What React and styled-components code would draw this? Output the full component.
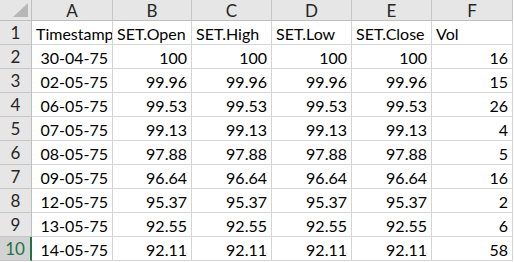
import React from 'react'
import styled, { createGlobalStyle } from 'styled-components'

const columns = ['A', 'B', 'C', 'D', 'E', 'F']
const widths = [32, 81, 79, 80, 80, 80, 81]

const header = ['Timestamp', 'SET.Open', 'SET.High', 'SET.Low', 'SET.Close', 'Vol']

const rows = [
  ['30-04-75', '100', '100', '100', '100', '16'],
  ['02-05-75', '99.96', '99.96', '99.96', '99.96', '15'],
  ['06-05-75', '99.53', '99.53', '99.53', '99.53', '26'],
  ['07-05-75', '99.13', '99.13', '99.13', '99.13', '4'],
  ['08-05-75', '97.88', '97.88', '97.88', '97.88', '5'],
  ['09-05-75', '96.64', '96.64', '96.64', '96.64', '16'],
  ['12-05-75', '95.37', '95.37', '95.37', '95.37', '2'],
  ['13-05-75', '92.55', '92.55', '92.55', '92.55', '6'],
  ['14-05-75', '92.11', '92.11', '92.11', '92.11', '58'],
]

const GlobalStyle = createGlobalStyle`
  body {
    margin: 0;
    background: #ffffff;
    overflow: hidden;
    font-family: Lato, "Open Sans", sans-serif;
  }
`

const Sheet = styled.div`
  display: grid;
  grid-template-columns: ${widths.map(w => w + 'px').join(' ')};
  grid-template-rows: 21px repeat(10, 24px);
  width: 514px;
  height: 262px;
  background: #ffffff;
  color: #000000;
  font-size: 16px;
`

const Corner = styled.div`
  position: relative;
  background: #e6e6e6;
  border-right: 1px solid #bfbfbf;
  border-bottom: 1px solid #bfbfbf;
`

const Triangle = styled.div`
  position: absolute;
  right: 3px;
  bottom: 3px;
  width: 0;
  height: 0;
  border-left: 15px solid transparent;
  border-bottom: 14px solid #b7b7b7;
`

const ColHead = styled.div`
  display: flex;
  align-items: center;
  justify-content: center;
  background: #e6e6e6;
  border-right: 1px solid #c6c6c6;
  border-bottom: 1px solid #bfbfbf;
  color: #262626;
  font-size: 17px;
`

const RowHead = styled.div`
  display: flex;
  align-items: center;
  justify-content: center;
  background: ${p => (p.$active ? '#d2d2d2' : '#e6e6e6')};
  border-right: ${p => (p.$active ? '2px solid #217346' : '1px solid #bfbfbf')};
  border-bottom: 1px solid #c6c6c6;
  color: ${p => (p.$active ? '#217346' : '#262626')};
  font-size: 17px;
`

const Cell = styled.div`
  display: flex;
  align-items: center;
  justify-content: ${p => (p.$right ? 'flex-end' : 'flex-start')};
  padding: ${p => (p.$right ? '1px 4px 0 2px' : '1px 0 0 4px')};
  border-right: 1px solid #d4d4d4;
  border-bottom: 1px solid #d4d4d4;
  white-space: nowrap;
  overflow: hidden;
  min-width: 0;
`

const App = () => (
  <>
    <GlobalStyle />
    <Sheet>
      <Corner>
        <Triangle />
      </Corner>
      {columns.map(c => (
        <ColHead key={c}>{c}</ColHead>
      ))}
      <RowHead>1</RowHead>
      {header.map(h => (
        <Cell key={h}>{h}</Cell>
      ))}
      {rows.map((row, i) => (
        <React.Fragment key={i}>
          <RowHead $active={i === rows.length - 1}>{i + 2}</RowHead>
          {row.map((v, j) => (
            <Cell key={j} $right>{v}</Cell>
          ))}
        </React.Fragment>
      ))}
    </Sheet>
  </>
)

export default App
